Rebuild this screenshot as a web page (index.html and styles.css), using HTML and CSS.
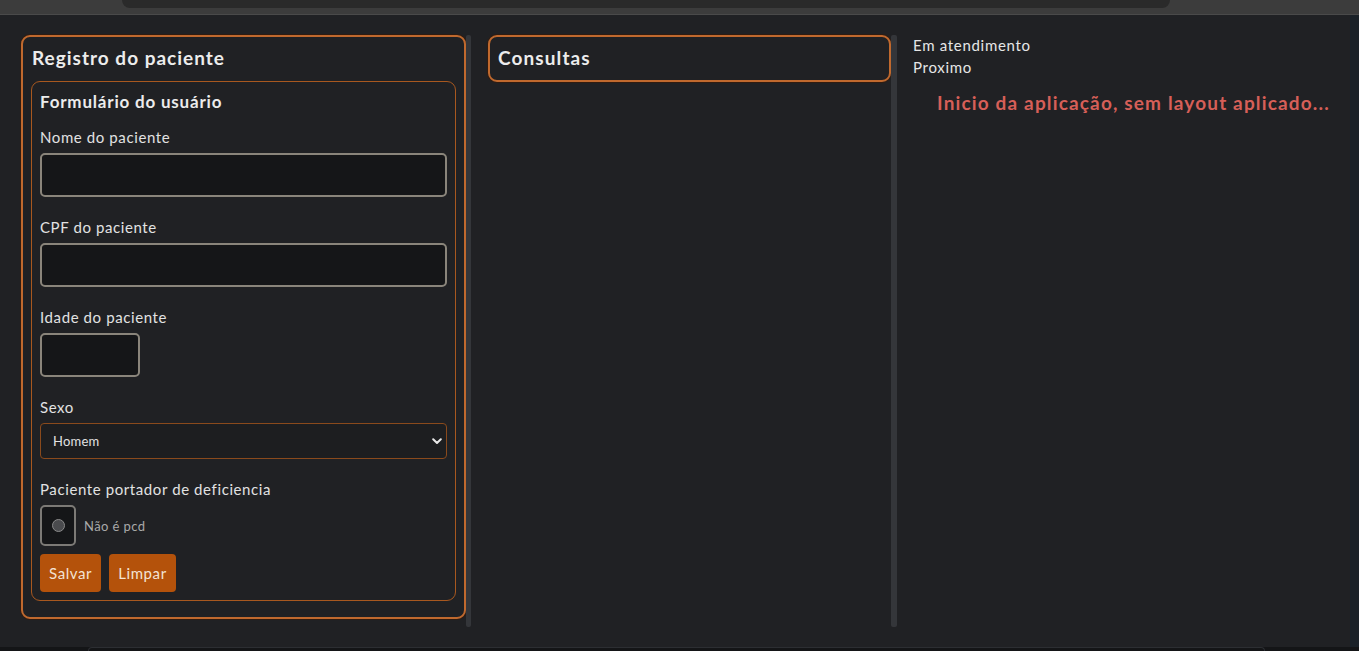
FILE: index.html
```html
<!DOCTYPE html>
<html lang="pt">
<head>
<meta charset="utf-8">
<title>Registro</title>
<link rel="stylesheet" href="styles.css">
</head>
<body>
<div class="page">
  <div class="chrome"><div class="chrome-pill"></div></div>
  <main class="main">
    <section class="col col-form">
      <div class="card">
        <h2 class="card-title">Registro do paciente</h2>
        <form class="inner-card">
          <h3 class="inner-title">Formulário do usuário</h3>
          <div class="group">
            <label class="label">Nome do paciente</label>
            <div class="input"></div>
          </div>
          <div class="group">
            <label class="label">CPF do paciente</label>
            <div class="input"></div>
          </div>
          <div class="group">
            <label class="label">Idade do paciente</label>
            <div class="input input-small"></div>
          </div>
          <div class="group">
            <label class="label">Sexo</label>
            <div class="select">
              <span>Homem</span>
              <svg class="chev" width="10" height="7" viewBox="0 0 10 7"><path d="M1.2 1.3 L5 5 L8.8 1.3" fill="none" stroke="#e8e8e8" stroke-width="2" stroke-linecap="round" stroke-linejoin="round"/></svg>
            </div>
          </div>
          <div class="group group-last">
            <label class="label">Paciente portador de deficiencia</label>
            <div class="radio-row">
              <div class="radio-box"><span class="radio-dot"></span></div>
              <span class="radio-text">Não é pcd</span>
            </div>
          </div>
          <div class="buttons">
            <button type="button" class="btn">Salvar</button>
            <button type="button" class="btn">Limpar</button>
          </div>
        </form>
      </div>
    </section>
    <div class="divider"></div>
    <section class="col col-cons">
      <div class="card card-short">
        <h2 class="card-title">Consultas</h2>
      </div>
    </section>
    <div class="divider divider-2"></div>
    <section class="col col-status">
      <p class="status">Em atendimento</p>
      <p class="status">Proximo</p>
      <p class="notice">Inicio da aplicação, sem layout aplicado...</p>
    </section>
    <div class="edge"></div>
  </main>
  <div class="bottom"><div class="bottom-pill"></div></div>
</div>
</body>
</html>
```

FILE: styles.css
```css
* { box-sizing: border-box; }
html, body { margin: 0; padding: 0; }
body {
  background: #202124;
  font-family: Lato, "Noto Sans", "Liberation Sans", sans-serif;
  color: #e6e6e6;
  overflow: hidden;
}
.page { width: 1359px; height: 651px; display: flex; flex-direction: column; }

.chrome {
  height: 15px;
  background: #3c3c3c;
  border-bottom: 1px solid #4a4a4a;
  padding-left: 122px;
  flex: none;
}
.chrome-pill {
  width: 1048px;
  height: 8px;
  background: #2a2a2a;
  border-radius: 0 0 10px 10px;
}

.main {
  flex: 1;
  display: flex;
  align-items: flex-start;
  padding-top: 20px;
  padding-left: 21px;
}
.col { flex: none; }
.col-form { width: 445px; }
.col-cons { width: 403px; margin-left: 17px; }
.col-status { width: 437px; margin-left: 16px; margin-top: -1px; }
.divider {
  width: 5px;
  height: 592px;
  background: #34363a;
  border-radius: 2px;
  flex: none;
}
.divider-2 { width: 6px; }
.edge {
  margin-left: auto;
  width: 9px;
  align-self: stretch;
  margin-top: -20px;
  background: #1a2128;
}

.card {
  border: 2px solid #c0692e;
  border-radius: 9px;
  padding: 7px 8px 16px 8px;
  box-shadow: 0 0 0 1px rgba(60, 25, 5, 0.6);
}
.card-short { padding-bottom: 8px; }
.card-title {
  margin: 0 0 0 1px;
  font-size: 19px;
  line-height: 28px;
  font-weight: 700;
  letter-spacing: 1px;
  color: #ececec;
}
.card-short .card-title { margin-left: 0; letter-spacing: 1.1px; }

.inner-card {
  margin-top: 9px;
  border: 1px solid #a8581f;
  border-radius: 9px;
  padding: 8px 8px 8px 8px;
}
.inner-title {
  margin: 0 0 12px 0;
  font-size: 17px;
  line-height: 24px;
  font-weight: 700;
  letter-spacing: 0.8px;
  color: #ececec;
}
.group { margin-bottom: 19px; }
.group-last { margin-bottom: 8px; }
.label {
  display: block;
  font-size: 15px;
  line-height: 22px;
  margin-bottom: 5px;
  color: #e2e2e2;
  font-weight: 400;
  letter-spacing: 0.6px;
}
.input {
  height: 44px;
  width: 407px;
  background: #151618;
  border: 2px solid #8a857b;
  border-radius: 5px;
}
.input-small { width: 100px; }

.select {
  position: relative;
  width: 407px;
  height: 36px;
  background: #1d1e20;
  border: 1px solid #8a4a1c;
  border-radius: 4px;
  display: flex;
  align-items: center;
  padding-left: 12px;
  font-size: 13px;
  letter-spacing: 0.2px;
  color: #e2e2e2;
}
.chev { position: absolute; right: 4px; top: 14px; }

.radio-row { display: flex; align-items: center; gap: 8px; }
.radio-box {
  width: 36px;
  height: 41px;
  background: #151618;
  border: 2px solid #7c7a76;
  border-radius: 5px;
  display: flex;
  align-items: center;
  justify-content: center;
}
.radio-dot {
  width: 13px;
  height: 13px;
  border-radius: 50%;
  background: #4a4b4e;
  border: 1px solid #8a8a8a;
}
.radio-text { font-size: 13px; color: #a9a9a9; letter-spacing: 0.4px; }

.buttons { display: flex; gap: 8px; }
.btn {
  height: 38px;
  padding: 0 9px;
  background: #b4520b;
  border: none;
  border-radius: 4px;
  font-family: Lato, "Noto Sans", sans-serif;
  font-size: 15px;
  letter-spacing: 0.6px;
  color: #f3e3d3;
}

.status {
  margin: 0;
  font-size: 15px;
  line-height: 22px;
  letter-spacing: 0.7px;
  color: #e6e6e6;
}
.notice {
  margin: 11px 0 0 0;
  padding-left: 24px;
  font-size: 19px;
  line-height: 28px;
  font-weight: 700;
  letter-spacing: 1.15px;
  color: #d65f58;
}

.bottom {
  height: 4px;
  background: #141517;
  padding: 0 94px 0 88px;
  flex: none;
}
.bottom-pill {
  height: 4px;
  border: 1px solid #2c2e32;
  border-bottom: none;
  border-radius: 6px 6px 0 0;
}
```
